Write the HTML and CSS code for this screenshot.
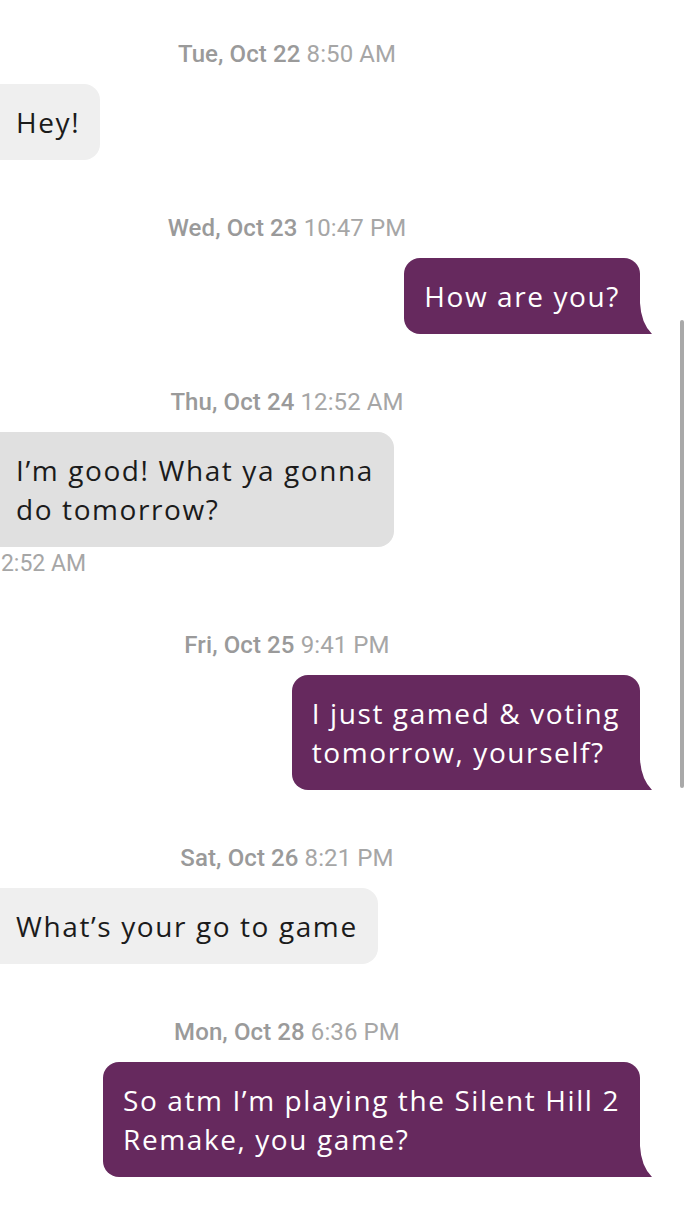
FILE: index.html
```html
<!DOCTYPE html>
<html lang="en">
	<head>
		<meta charset="UTF-8">
		<meta name="viewport" content="width=device-width, initial-scale=1.0">
		<title>Chat</title>
		<link rel="stylesheet" href="styles.css">
	</head>
	<body>
		<div class="chat">
			<div class="stamp"><b>Tue, Oct 22</b> 8:50 AM</div>
			<div class="row in">
				<div class="bubble">Hey!</div>
			</div>

			<div class="stamp"><b>Wed, Oct 23</b> 10:47 PM</div>
			<div class="row out">
				<div class="bubble">How are you?</div>
			</div>

			<div class="stamp"><b>Thu, Oct 24</b> 12:52 AM</div>
			<div class="row in">
				<div class="bubble sel">I’m good! What ya gonna<br>do tomorrow?</div>
				<div class="meta">12:52 AM</div>
			</div>

			<div class="stamp"><b>Fri, Oct 25</b> 9:41 PM</div>
			<div class="row out">
				<div class="bubble">I just gamed &amp; voting<br>tomorrow, yourself?</div>
			</div>

			<div class="stamp"><b>Sat, Oct 26</b> 8:21 PM</div>
			<div class="row in">
				<div class="bubble">What’s your go to game</div>
			</div>

			<div class="stamp"><b>Mon, Oct 28</b> 6:36 PM</div>
			<div class="row out">
				<div class="bubble">So atm I’m playing the Silent Hill 2<br>Remake, you game?</div>
			</div>
		</div>
		<div class="scrollbar"></div>
	</body>
</html>
```

FILE: styles.css
```css
* {
	margin: 0;
	padding: 0;
	box-sizing: border-box;
}

body {
	background: #fff;
	font-family: Roboto, "Liberation Sans", sans-serif;
	overflow: hidden;
}

.chat {
	padding-top: 39px;
	display: flex;
	flex-direction: column;
}

.stamp {
	width: 574px;
	text-align: center;
	font-size: 24px;
	line-height: 30px;
	letter-spacing: 0.1px;
	color: #a6a6a6;
	margin-bottom: 15px;
}

.stamp b {
	font-weight: 500;
	color: #9a9a9a;
}

.row {
	display: flex;
	flex-direction: column;
	margin-bottom: 53px;
}

.row.in {
	align-items: flex-start;
}

.row.out {
	align-items: flex-end;
	padding-right: 50px;
}

.bubble {
	position: relative;
	font-family: "Open Sans", sans-serif;
	font-size: 28px;
	line-height: 39px;
	letter-spacing: 1.6px;
	padding: 19px 20px 18px;
	border-radius: 16px;
}

.in .bubble {
	margin-left: -14px;
	padding-left: 30px;
	background: #efefef;
	color: #1b1b1b;
}

.in .bubble.sel {
	background: #e0e0e0;
}

.out .bubble {
	background: #66295e;
	color: #fff;
	border-bottom-right-radius: 0;
}

.out .bubble::after {
	content: '';
	position: absolute;
	right: -12px;
	bottom: 0;
	width: 12px;
	height: 31px;
	background: #66295e;
	clip-path: path('M0 0 Q1 20 12 31 L0 31 Z');
}

.meta {
	margin-left: -12px;
	font-size: 23px;
	line-height: 26px;
	margin-top: 4px;
	color: #a6a6a6;
}

.scrollbar {
	position: fixed;
	top: 320px;
	left: 680px;
	width: 4px;
	height: 468px;
	border-radius: 2px;
	background: #a9a9a9;
}
```
